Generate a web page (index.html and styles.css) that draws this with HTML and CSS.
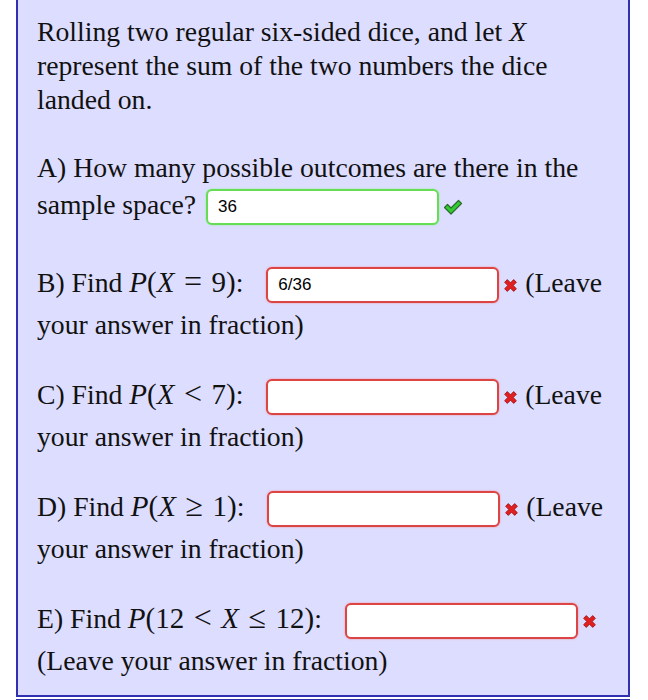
FILE: index.html
```html
<!DOCTYPE html>
<html>
<head>
<meta charset="utf-8">
<link rel="stylesheet" href="styles.css">
</head>
<body>
<div class="problem">
  <p class="para">Rolling two regular six-sided dice, and let <i class="mv">X</i> represent the sum of the two numbers the dice landed on.</p>
  <p class="para">A) How many possible outcomes are there in the sample space? <span class="ans"><span class="field ok">36</span><span class="mark check"><svg width="20" height="16" viewBox="0 0 20 16"><path d="M1.5 8.5 L4.5 5.5 L8 9 L15.5 1.5 L18.5 4.5 L8 15 Z" fill="#33cc33" stroke="#2a6a2a" stroke-width="1.2" stroke-linejoin="round"/></svg></span></span></p>
  <p class="para">B) Find <span class="math"><i class="mv">P</i>(<i class="mv">X</i><span class="op">=</span>9)</span>: <span class="ans m"><span class="field bad">6/36</span><span class="mark cross"><svg width="15" height="15" viewBox="0 0 14 14"><path d="M1.5 4 L4 1.5 L7 4.5 L10 1.5 L12.5 4 L9.5 7 L12.5 10 L10 12.5 L7 9.5 L4 12.5 L1.5 10 L4.5 7 Z" fill="#e02020" stroke="#a01010" stroke-width="0.8" stroke-linejoin="round"/></svg></span></span> (Leave your answer in fraction)</p>
  <p class="para">C) Find <span class="math"><i class="mv">P</i>(<i class="mv">X</i><span class="op">&lt;</span>7)</span>: <span class="ans m"><span class="field bad"></span><span class="mark cross"><svg width="15" height="15" viewBox="0 0 14 14"><path d="M1.5 4 L4 1.5 L7 4.5 L10 1.5 L12.5 4 L9.5 7 L12.5 10 L10 12.5 L7 9.5 L4 12.5 L1.5 10 L4.5 7 Z" fill="#e02020" stroke="#a01010" stroke-width="0.8" stroke-linejoin="round"/></svg></span></span> (Leave your answer in fraction)</p>
  <p class="para">D) Find <span class="math"><i class="mv">P</i>(<i class="mv">X</i><span class="op">&ge;</span>1)</span>: <span class="ans m"><span class="field bad"></span><span class="mark cross"><svg width="15" height="15" viewBox="0 0 14 14"><path d="M1.5 4 L4 1.5 L7 4.5 L10 1.5 L12.5 4 L9.5 7 L12.5 10 L10 12.5 L7 9.5 L4 12.5 L1.5 10 L4.5 7 Z" fill="#e02020" stroke="#a01010" stroke-width="0.8" stroke-linejoin="round"/></svg></span></span> (Leave your answer in fraction)</p>
  <p class="para">E) Find <span class="math"><i class="mv">P</i>(12<span class="op">&lt;</span><i class="mv">X</i><span class="op">&le;</span>12)</span>: <span class="ans m"><span class="field bad"></span><span class="mark cross"><svg width="15" height="15" viewBox="0 0 14 14"><path d="M1.5 4 L4 1.5 L7 4.5 L10 1.5 L12.5 4 L9.5 7 L12.5 10 L10 12.5 L7 9.5 L4 12.5 L1.5 10 L4.5 7 Z" fill="#e02020" stroke="#a01010" stroke-width="0.8" stroke-linejoin="round"/></svg></span></span> (Leave your answer in fraction)</p>
</div>
<div class="next"></div>
</body>
</html>
```
FILE: styles.css
```css
html, body {
  margin: 0;
  padding: 0;
  background: #ffffff;
}
.problem {
  margin-left: 16px;
  width: 614px;
  background: #ddddff;
  border-left: 2px solid #3030b0;
  border-right: 2px solid #3030b0;
  border-bottom: 2px solid #3030b0;
  padding: 15px 20px 17px 19px;
  box-sizing: border-box;
  font-family: "Liberation Serif", "Times New Roman", serif;
  font-size: 27.7px;
  line-height: 34px;
  color: #111111;
}
.para {
  margin: 0 0 33px 0;
}
.para:first-child {
  margin-bottom: 34px;
}
.para:last-child {
  margin-bottom: 0;
}
.mv {
  font-style: italic;
}
.math {
  font-size: 29px;
}
.math .op {
  font-size: 32px;
  margin: 0 9.5px;
}
.ans {
  display: inline-flex;
  align-items: center;
  vertical-align: middle;
  padding: 4px 0 5px 0;
  margin-left: 3px;
}
.ans.m {
  margin-left: 16px;
}
.field {
  display: inline-block;
  box-sizing: border-box;
  width: 233px;
  height: 36px;
  background: #ffffff;
  border-radius: 6px;
  font-family: "Liberation Sans", Arial, sans-serif;
  font-size: 17px;
  line-height: 32px;
  padding: 0 10px;
  color: #000;
}
.field.ok {
  border: 2px solid #66dd55;
  box-shadow: 0 0 2px #88ee88;
}
.field.bad {
  border: 2px solid #dd4444;
  box-shadow: 0 0 2px #ee8888;
}
.mark {
  display: inline-flex;
  margin-left: 4px;
}
.next {
  margin-left: 16px;
  width: 614px;
  height: 4px;
  margin-top: 2px;
  border-top: 2px solid #3030b0;
  background: #ddddff;
}
```
